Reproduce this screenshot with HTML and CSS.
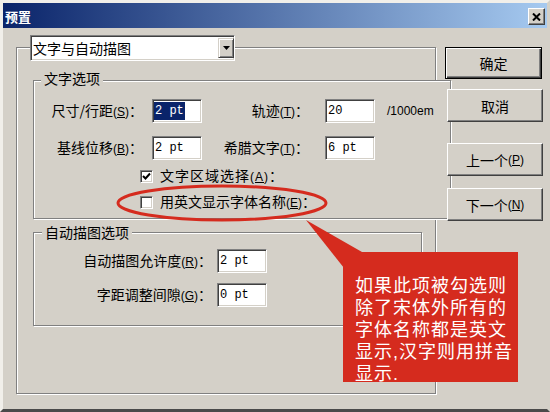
FILE: index.html
```html
<!DOCTYPE html>
<html>
  <head>
    <meta charset="utf-8">
    <title>预置</title>
    <link rel="stylesheet" href="styles.css">
  </head>
  <body>
    <div class="window">
      <div class="titlebar">
        <span class="title">预置</span>
        <span class="close">
          <svg width="9" height="8" viewBox="0 0 9 8"><path d="M1 0.5 L8 7.5 M8 0.5 L1 7.5" stroke="#000" stroke-width="2"/></svg>
        </span>
      </div>

      <div class="content">
        <div class="outer">
          <div class="select">
            <span class="select-text">文字与自动描图</span>
            <span class="select-btn">
              <svg width="7" height="4" viewBox="0 0 7 4"><path d="M0 0 H7 L3.5 4 Z" fill="#000"/></svg>
            </span>
          </div>

          <!-- 文字选项 -->
          <div class="group group-text">
            <div class="legend">文字选项</div>
            <div class="grid grid-text">
              <span class="label">尺寸/行距<span class="key">(<u>S</u>)</span>：</span>
              <span class="field"><span class="sel">2 pt</span></span>
              <span class="label label-mid">轨迹<span class="key">(<u>T</u>)</span>：</span>
              <span class="field">20</span>
              <span class="unit">/1000em</span>

              <span class="label">基线位移<span class="key">(<u>B</u>)</span>：</span>
              <span class="field">2 pt</span>
              <span class="label label-mid">希腊文字<span class="key">(<u>T</u>)</span>：</span>
              <span class="field">6 pt</span>
              <span></span>
            </div>
            <div class="check check-first">
              <span class="box">
                <svg width="9" height="9" viewBox="0 0 9 9"><polyline points="1,4 3.5,6.5 8,1.5" fill="none" stroke="#000" stroke-width="2"/></svg>
              </span>
              <span class="check-text wide">文字区域选择<span class="key">(<u>A</u>)</span>：</span>
            </div>
            <div class="check">
              <span class="box"></span>
              <span class="check-text">用英文显示字体名称<span class="key">(<u>E</u>)</span>：</span>
            </div>
          </div>

          <!-- 自动描图选项 -->
          <div class="group group-trace">
            <div class="legend legend-trace">自动描图选项</div>
            <div class="grid grid-trace">
              <span class="label">自动描图允许度<span class="key">(<u>R</u>)</span>：</span>
              <span class="field">2 pt</span>
              <span class="label">字距调整间隙<span class="key">(<u>G</u>)</span>：</span>
              <span class="field">0 pt</span>
            </div>
          </div>
        </div>

        <div class="buttons">
          <span class="btn btn-default">确定</span>
          <span class="btn btn-cancel">取消</span>
          <span class="btn btn-prev">上一个<span class="key">(<u>P</u>)</span></span>
          <span class="btn btn-next">下一个<span class="key">(<u>N</u>)</span></span>
        </div>
      </div>

      <!-- 批注：红圈和说明框 -->
      <svg class="annot" width="550" height="412" viewBox="0 0 550 412">
        <ellipse cx="222" cy="203" rx="104" ry="17" fill="none" stroke="#d52b1e" stroke-width="3"/>
        <polygon points="306,220 344,268 362,252" fill="#d52b1e"/>
      </svg>
      <div class="callout">如果此项被勾选则<br>除了宋体外所有的<br>字体名称都是英文<br>显示,汉字则用拼音<br>显示.</div>
    </div>
  </body>
</html>
```

FILE: styles.css
```css
* {
  margin: 0;
  padding: 0;
  box-sizing: border-box;
}
body {
  background: #d4d0c8;
  font-family: "Noto Sans CJK SC", sans-serif;
  font-size: 14px;
  color: #000;
}
.window {
  position: relative;
  width: 550px;
  height: 412px;
  background: #d4d0c8;
  border: 3px solid #d4d0c8;
  border-top-color: #f1efea;
  border-left-color: #f1efea;
  border-bottom-color: #4a4a4a;
  overflow: hidden;
}

/* 标题栏 */
.titlebar {
  height: 25px;
  background: linear-gradient(to right, #0a246a, #a6caf0);
  display: flex;
  align-items: center;
  justify-content: space-between;
  padding: 2px 2px 0 2px;
}
.title {
  color: #fff;
  font-weight: bold;
  font-size: 13px;
  line-height: 16px;
}
.close {
  width: 17px;
  height: 17px;
  background: #d4d0c8;
  border: 1px solid;
  border-color: #fff #404040 #404040 #fff;
  box-shadow: inset -1px -1px 0 #808080;
  display: flex;
  align-items: center;
  justify-content: center;
}

.content {
  display: flex;
  align-items: flex-start;
}

/* 凹陷边框 */
.select,
.field,
.box {
  background: #fff;
  border: 1px solid;
  border-color: #808080 #fff #fff #808080;
  box-shadow: inset 1px 1px 0 #404040, inset -1px -1px 0 #d4d0c8;
}

.outer {
  margin: 19px 0 0 13px;
  width: 420px;
  height: 347px;
  border: 1px solid #808080;
  box-shadow: inset 1px 1px 0 #fff, 1px 1px 0 #fff;
}
.select {
  display: flex;
  align-items: center;
  margin: -13px 0 0 13px;
  width: 205px;
  height: 26px;
  padding: 2px 0 2px 2px;
}
.select-text {
  line-height: 18px;
}
.select-btn {
  margin-left: auto;
  width: 16px;
  height: 20px;
  background: #d4d0c8;
  border: 1px solid;
  border-color: #d4d0c8 #404040 #404040 #d4d0c8;
  box-shadow: inset 1px 1px 0 #fff, inset -1px -1px 0 #808080;
  display: flex;
  align-items: center;
  justify-content: center;
}

/* 分组框 */
.group {
  display: flex;
  flex-direction: column;
  align-items: flex-start;
  background: #d4d0c8;
  border: 1px solid #808080;
  box-shadow: inset 1px 1px 0 #fff, 1px 1px 0 #fff;
}
.group-text {
  margin: 19px -16px 0 16px;
  height: 139px;
}
.group-trace {
  margin: 13px 0 0 16px;
  width: 389px;
  height: 94px;
}
.legend {
  margin: -11px 0 0 7px;
  padding: 0 3px;
  line-height: 16px;
  background: #d4d0c8;
}
.legend-trace {
  margin: -9px 0 0 8px;
}

.grid {
  display: grid;
  column-gap: 5px;
  align-items: center;
}
.grid-text {
  grid-template-columns: 113px 50px 113px 50px auto;
  row-gap: 13px;
  margin-top: 13px;
}
.grid-trace {
  grid-template-columns: 178px 50px;
  row-gap: 10px;
  margin-top: 9px;
}
.label {
  text-align: right;
  white-space: nowrap;
  line-height: 18px;
  padding-right: 4px;
}
.label-mid {
  padding-right: 11px;
}
.grid-trace .label {
  padding-right: 0;
}
.key {
  font-family: "Liberation Sans", sans-serif;
  font-size: 12px;
}
.field {
  height: 24px;
  display: flex;
  align-items: center;
  padding-left: 2px;
  font-family: "Liberation Mono", monospace;
  font-size: 12px;
}
.sel {
  background: #0a246a;
  color: #fff;
  line-height: 18px;
  padding: 0 1px;
  margin-left: -1px;
}
.unit {
  margin-left: 7px;
  font-family: "Liberation Sans", sans-serif;
  font-size: 12px;
}

.check {
  display: flex;
  align-items: center;
  height: 16px;
  margin: 10px 0 0 106px;
}
.check-first {
  margin-top: 8px;
}
.box {
  width: 13px;
  height: 13px;
  display: flex;
  align-items: center;
  justify-content: center;
}
.check-text {
  margin-left: 7px;
  white-space: nowrap;
  line-height: 16px;
}
.wide {
  letter-spacing: 1px;
}

/* 右侧按钮 */
.buttons {
  position: relative;
  z-index: 2;
  display: flex;
  flex-direction: column;
  align-items: flex-start;
  margin: 19px 0 0 9px;
}
.btn {
  width: 96px;
  height: 33px;
  margin-left: 2px;
  display: flex;
  align-items: center;
  justify-content: center;
  background: #d4d0c8;
  border: 1px solid;
  border-color: #fff #404040 #404040 #fff;
  box-shadow: inset -1px -1px 0 #808080;
}
.btn-default {
  width: 97px;
  height: 32px;
  margin-left: 0;
  border: 1px solid #000;
  box-shadow: inset 1px 1px 0 #fff, inset -1px -1px 0 #404040, inset -2px -2px 0 #808080;
}
.btn-cancel {
  margin-top: 10px;
}
.btn-prev {
  margin-top: 21px;
}
.btn-next {
  margin-top: 12px;
}

/* 批注 */
.annot {
  position: absolute;
  left: -3px;
  top: -3px;
  z-index: 3;
}
.callout {
  position: absolute;
  left: 340px;
  top: 249px;
  z-index: 4;
  width: 175px;
  height: 130px;
  padding: 23px 0 0 12px;
  background: #d52b1e;
  color: #fff;
  font-family: "Liberation Sans", "Noto Sans CJK SC", sans-serif;
  font-size: 18px;
  line-height: 22px;
  letter-spacing: 1px;
  white-space: nowrap;
}
```
